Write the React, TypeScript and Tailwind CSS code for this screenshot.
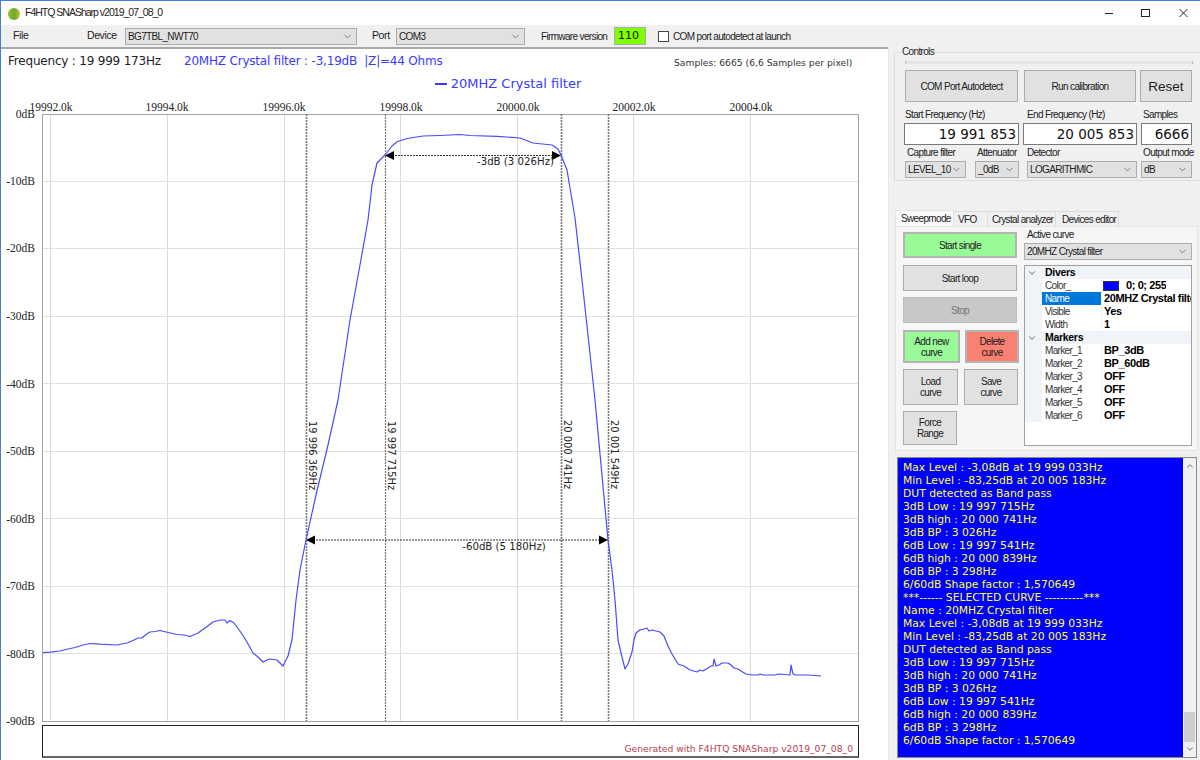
import React from "react";
import { ChevronDown, ChevronUp } from "lucide-react";

const curve: [number, number][] = [
  [43,652.7],[50,652.2],[60,651],[66,649.5],[75,647.5],[83,645],[90,643.5],[100,644.2],[117,645],[127,643],[133,640.5],[138,638],[142,637.8],[146,634.5],[150,632],[155,631.5],[160,630.5],[166,632],[177,634.5],[184,635],[190,636.5],[198,633],[205,628],[213,622],[220,620],[225,620],[227,623],[230,620.5],[234,623],[237,627],[242,634],[247,642],[253,653],[258,657],[263,662],[267,660],[270,659],[274,659.5],[277,660],[281,664],[283,666],[288,656],[292,640],[296,600],[300,570],[306,540],[316,495],[328,445],[338,400],[350,320],[360,265],[368,220],[372,185],[377,163],[385,155],[392,146],[397,141.7],[407,138.5],[423,136],[440,135.5],[460,134.5],[470,135.5],[497,136.3],[520,138],[533,143],[552,145],[558,149],[561,155],[567,170],[575,218],[582,280],[595,400],[608,540],[612,570],[615,600],[618,640],[622,657],[625,669],[628,664],[632,652],[634,640],[636,633],[640,630],[644,629],[647,628],[649,631],[652,630],[660,632],[664,636],[668,646],[672,654],[678,664],[684,666],[690,670],[697,672],[700,670],[703,671],[708,668],[711,666],[713,666],[714,659],[716,666],[719,665],[722,663],[728,663],[731,665],[734,668],[738,669],[741,671],[746,674],[752,675],[758,675],[760,674],[763,675],[775,675],[778,674],[790,675],[791,665],[793,674],[796,675],[808,675],[821,676],
];

const vGrid = [50.5, 167.5, 284.5, 400.5, 517.5, 633.5, 750.5];
const hGrid = [181.5, 248.5, 316.5, 383.5, 451.5, 518.5, 586.5, 653.5];
const yLabels: [string, number][] = [["0dB",114],["-10dB",181],["-20dB",248],["-30dB",316],["-40dB",384],["-50dB",451],["-60dB",519],["-70dB",586],["-80dB",654],["-90dB",721]];
const xLabels: [string, number][] = [["19992.0k",51],["19994.0k",167],["19996.0k",284],["19998.0k",401],["20000.0k",518],["20002.0k",634],["20004.0k",751]];
const markers: [number, string, number][] = [[306,"19 996 369Hz",421],[385,"19 997 715Hz",421],[561,"20 000 741Hz",420],[608,"20 001 549Hz",420]];

const logLines = [
  "Max Level : -3,08dB at 19 999 033Hz","Min Level : -83,25dB at 20 005 183Hz","DUT detected as Band pass","3dB Low : 19 997 715Hz","3dB high : 20 000 741Hz","3dB BP : 3 026Hz","6dB Low : 19 997 541Hz","6dB high : 20 000 839Hz","6dB BP : 3 298Hz","6/60dB Shape factor : 1,570649","***------ SELECTED CURVE ----------***","Name : 20MHZ Crystal filter","Max Level : -3,08dB at 19 999 033Hz","Min Level : -83,25dB at 20 005 183Hz","DUT detected as Band pass","3dB Low : 19 997 715Hz","3dB high : 20 000 741Hz","3dB BP : 3 026Hz","6dB Low : 19 997 541Hz","6dB high : 20 000 839Hz","6dB BP : 3 298Hz","6/60dB Shape factor : 1,570649",
];

function Combo({ text, className }: { text: string; className: string }) {
  return (
    <div className={`flex items-center justify-between bg-[#e1e1e1] border border-[#adadad] pl-[2px] pr-[3px] text-[10px] text-[#222] ${className}`}>
      <span className="whitespace-nowrap">{text}</span>
      <ChevronDown size={11} strokeWidth={1.5} className="text-[#555] shrink-0" />
    </div>
  );
}

function Btn({ children, className }: { children: React.ReactNode; className: string }) {
  return (
    <div className={`flex items-center justify-center text-center leading-[11px] border border-[#adadad] bg-[#e1e1e1] text-[#222] ${className}`}>
      {children}
    </div>
  );
}

function Colored({ children, className, color }: { children: React.ReactNode; className: string; color: string }) {
  return (
    <div className={`border-2 border-[#b4b4b4] flex items-center justify-center text-center leading-[11px] text-[10px] text-[#222] ${color} ${className}`}>
      {children}
    </div>
  );
}

function FreqInput({ value, className }: { value: string; className: string }) {
  return (
    <div className={`h-[22px] bg-white border border-[#7a7a7a] text-right pr-[2px] font-['DejaVu_Sans',sans-serif] tracking-normal text-[13.5px] leading-[20px] text-[#111] ${className}`}>
      {value}
    </div>
  );
}

function GridHeader({ label }: { label: string }) {
  return (
    <div className="flex h-[13px] items-center bg-[#f0f4f8] font-bold text-[10.5px] tracking-[-0.3px] leading-[13px] text-black">
      <ChevronDown size={10} strokeWidth={2} className="ml-[2px] mr-[8px] text-[#444]" />
      {label}
    </div>
  );
}

function GridRow({ name, value, selected }: { name: string; value: React.ReactNode; selected?: boolean }) {
  return (
    <div className="flex h-[13px] items-center text-[10px] leading-[13px]">
      <div className="w-[17px] h-full bg-[#f0f4f8] shrink-0" />
      <div className={`w-[60px] h-full pl-[3px] shrink-0 border-r border-[#f0f0f0] ${selected ? "bg-[#0078d7] text-white" : "text-[#333]"}`}>{name}</div>
      <div className="pl-[2px] font-bold text-[11px] tracking-[-0.4px] whitespace-nowrap text-black overflow-hidden">{value}</div>
    </div>
  );
}

export default function App() {
  return (
    <div className="w-[1200px] h-[760px] overflow-hidden flex flex-col bg-[#f0f0f0] border-t border-l border-[#3f80d8] font-['Liberation_Sans',sans-serif] text-[10px] tracking-[-0.65px]">
      {/* title bar */}
      <div className="h-[24px] shrink-0 bg-white flex items-center">
        <div className="ml-[7px] mt-px w-[12px] h-[12px] rounded-full bg-[linear-gradient(90deg,#8fbf2c,#6fa82c_55%,#b9c93a)]" />
        <span className="ml-[5px] text-[10.5px] tracking-[-1px] text-[#222]">F4HTQ SNASharp v2019_07_08_0</span>
        <svg className="ml-auto" width="100" height="24" viewBox="0 0 100 24" fill="none" stroke="#222" strokeWidth="1">
          <path d="M5 12.5H13" />
          <rect x="41.5" y="8.5" width="8" height="7" />
          <path d="M79.5 8L87.5 16M87.5 8L79.5 16" />
        </svg>
      </div>
      {/* toolbar */}
      <div className="h-[22px] shrink-0 flex items-center text-[#222]">
        <span className="ml-[12px] w-[74px] text-[10.5px] tracking-[-0.4px]">File</span>
        <span className="w-[38px] text-[10.5px] tracking-[-0.4px]">Device</span>
        <Combo text="BG7TBL_NWT70" className="w-[232px] h-[17px]" />
        <span className="ml-[15px] w-[24px] text-[10.5px] tracking-[-0.4px]">Port</span>
        <Combo text="COM3" className="w-[129px] h-[17px]" />
        <span className="ml-[16px] w-[73px] whitespace-nowrap">Firmware version</span>
        <div className="w-[32px] h-[18px] border border-[#aaa] bg-[#7fff00] pl-[3px] font-['DejaVu_Sans',sans-serif] tracking-normal text-[11px] leading-[16px] text-[#111]">110</div>
        <div className="ml-[12px] w-[11px] h-[11px] border border-[#444] bg-white" />
        <span className="ml-[4px] whitespace-nowrap">COM port autodetect at launch</span>
      </div>
      {/* main */}
      <div className="flex-1 flex min-h-0">
        <div className="w-[887px] shrink-0 flex flex-col bg-white border-t-2 border-[#a8a8a8] relative">
          <div className="h-[24px] shrink-0 flex items-center font-['DejaVu_Sans',sans-serif] tracking-[-0.2px] whitespace-nowrap">
            <span className="ml-[7px] w-[176px] text-[12px] text-[#222]">Frequency : 19 999 173Hz</span>
            <span className="w-[490px] text-[12px] text-[#3a3aff]">20MHZ Crystal filter : -3,19dB&nbsp; |Z|=44 Ohms</span>
            <span className="text-[9.2px] tracking-normal text-[#333] mt-[3px]">Samples: 6665 (6,6 Samples per pixel)</span>
          </div>
          <div className="h-[22px] shrink-0 flex items-center justify-center pl-[128px] font-['DejaVu_Sans',sans-serif] tracking-normal text-[13px] text-[#3a3aff]">
            <div className="ml-[-1px] w-[12px] h-[2px] bg-[#3a3aff] mr-[4px]" />
            20MHZ Crystal filter
          </div>
          <svg width="887" height="630" viewBox="1 95 887 630" className="block shrink-0 overflow-visible">
            {vGrid.map((x) => <line key={x} x1={x} x2={x} y1={114} y2={721} stroke="#dadada" />)}
            {hGrid.map((y) => <line key={y} x1={43} x2={858} y1={y} y2={y} stroke="#e0e0e0" strokeWidth={1.2} />)}
            <rect x="42.5" y="114.5" width="816" height="607" fill="none" stroke="#a4a4a4" />
            {xLabels.map(([t, x]) => <text key={t} x={x} y={111} textAnchor="middle" fontFamily="'Liberation Serif',serif" fontSize="11.5" letterSpacing="0" fill="#222">{t}</text>)}
            {yLabels.map(([t, y]) => <text key={t} x={35} y={y + 4} textAnchor="end" fontFamily="'Liberation Serif',serif" fontSize="11.5" letterSpacing="0" fill="#222">{t}</text>)}
            {markers.map(([x]) => <line key={x} x1={x + 0.5} x2={x + 0.5} y1={114} y2={721} stroke="#777" strokeWidth={x === 385 ? 1.2 : 1.6} strokeDasharray="2 1" />)}
            <polyline points={curve.map((p) => p.join(",")).join(" ")} fill="none" stroke="#4a4aff" strokeWidth={1.2} strokeLinejoin="round" />
            <line x1={392} x2={554} y1={155.5} y2={155.5} stroke="#333" strokeWidth={1.2} strokeDasharray="2 1" />
            <path d="M385 155.5L394 151V160Z M561 155.5L552 151V160Z" fill="#000" />
            <text x={515.5} y={165} textAnchor="middle" fontFamily="'DejaVu Sans',sans-serif" fontSize="10.2" letterSpacing="0" fill="#222">-3dB (3 026Hz)</text>
            <line x1={313} x2={601} y1={540} y2={540} stroke="#333" strokeWidth={1.2} strokeDasharray="2 1" />
            <path d="M306 540L315 535.5V544.5Z M608 540L599 535.5V544.5Z" fill="#000" />
            <text x={504} y={550} textAnchor="middle" fontFamily="'DejaVu Sans',sans-serif" fontSize="10.2" letterSpacing="0" fill="#222">-60dB (5 180Hz)</text>
            {markers.map(([x, t, y]) => (
              <text key={t} transform={`translate(${x + 2.5} ${y}) rotate(90)`} fontFamily="'DejaVu Sans',sans-serif" fontSize="9.9" letterSpacing="0" fill="#222">{t}</text>
            ))}
          </svg>
          <div className="ml-[41px] w-[817px] h-[33px] shrink-0 border border-[#222] border-b-2 border-b-[#666] flex items-end justify-end pr-[5px] font-['DejaVu_Sans',sans-serif] tracking-normal text-[9.2px] leading-[15px] text-[#b5404f] bg-white">
            Generated with F4HTQ SNASharp v2019_07_08_0
          </div>
        </div>

        {/* right side */}
        <div className="flex-1 min-w-0 pl-[5px] border-l border-[#e8e8e8]">
          {/* controls */}
          <div className="relative mt-[5px] h-[129px] border border-r-0 border-[#dcdcdc] pl-[10px] pt-[8px]">
            <span className="absolute left-[6px] top-[-7px] bg-[#f0f0f0] px-px leading-[12px] text-[#222]">Controls</span>
            <div className="w-[288px] h-[3px] bg-[#e4e4e4] border-x border-[#bbb]" />
            <div className="flex mt-[6px]">
              <Btn className="w-[113px] h-[32px]">COM Port Autodetect</Btn>
              <Btn className="ml-[6px] w-[112px] h-[32px]">Run calibration</Btn>
              <Btn className="ml-[4px] w-[52px] h-[32px] text-[13.5px] tracking-normal">Reset</Btn>
            </div>
            <div className="flex h-[21px] items-end pb-[2px] leading-[12px] text-[#222]">
              <span className="w-[122px]">Start Frequency (Hz)</span>
              <span className="w-[116px]">End Frequency (Hz)</span>
              <span>Samples</span>
            </div>
            <div className="flex ml-[-1px]">
              <FreqInput value="19 991 853" className="w-[115px]" />
              <FreqInput value="20 005 853" className="ml-[4px] w-[114px]" />
              <FreqInput value="6666" className="ml-[4px] w-[51px]" />
            </div>
            <div className="flex h-[15px] items-end pb-[1px] leading-[12px] text-[#222]">
              <span className="ml-[2px] w-[70px] whitespace-nowrap">Capture filter</span>
              <span className="w-[50px] whitespace-nowrap">Attenuator</span>
              <span className="w-[116px] whitespace-nowrap">Detector</span>
              <span className="whitespace-nowrap">Output mode</span>
            </div>
            <div className="flex mt-[1px]">
              <Combo text="LEVEL_10" className="w-[61px] h-[17px]" />
              <Combo text="_0dB" className="ml-[9px] w-[44px] h-[17px]" />
              <Combo text="LOGARITHMIC" className="ml-[8px] w-[110px] h-[17px]" />
              <Combo text="dB" className="ml-[4px] w-[51px] h-[17px]" />
            </div>
          </div>

          {/* tabs */}
          <div className="mt-[29px] flex items-end h-[16px] text-[#222] ml-px">
            <div className="w-[59px] h-[16px] bg-[#fafafa] border-x border-t border-[#e4e4e4] flex items-center pl-[5px] pb-px">Sweepmode</div>
            <div className="ml-px w-[33px] h-[15px] bg-[#f0f0f0] border-r border-t border-[#dcdcdc] flex items-center pl-[3px]">VFO</div>
            <div className="w-[68px] h-[15px] bg-[#f0f0f0] border-r border-t border-[#dcdcdc] flex items-center pl-[4px] whitespace-nowrap">Crystal analyzer</div>
            <div className="w-[63px] h-[15px] bg-[#f0f0f0] border-r border-t border-[#dcdcdc] flex items-center pl-[6px] whitespace-nowrap">Devices editor</div>
          </div>
          <div className="ml-[1px] w-[303px] h-[225px] bg-[#f6f6f6] border border-[#e4e4e4] flex pl-[7px] pt-[5px]">
            <div className="w-[121px] shrink-0">
              <Colored className="w-[114px] h-[26px]" color="bg-[#98fb98]">Start single</Colored>
              <Btn className="mt-[7px] w-[114px] h-[26px]">Start loop</Btn>
              <div className="mt-[6px] w-[114px] h-[26px] flex items-center justify-center bg-[#c8c8c8] border border-[#bdbdbd] text-[#777]">Stop</div>
              <div className="flex mt-[7px]">
                <Colored className="w-[57px] h-[33px]" color="bg-[#98fb98]">Add new<br />curve</Colored>
                <Colored className="ml-[5px] w-[54px] h-[33px]" color="bg-[#fa8072]">Delete<br />curve</Colored>
              </div>
              <div className="flex mt-[6px]">
                <Btn className="w-[55px] h-[36px]">Load<br />curve</Btn>
                <Btn className="ml-[6px] w-[54px] h-[36px]">Save<br />curve</Btn>
              </div>
              <Btn className="mt-[6px] w-[54px] h-[34px]">Force<br />Range</Btn>
            </div>
            <div className="w-[168px] shrink-0 flex flex-col">
              <span className="leading-[12px] text-[#222] ml-[3px] mt-[-3px]">Active curve</span>
              <Combo text="20MHZ Crystal filter" className="mt-[2px] w-[168px] h-[17px]" />
              <div className="mt-[5px] w-[168px] h-[181px] border border-[#a0a0a0] bg-white overflow-hidden">
                <GridHeader label="Divers" />
                <GridRow name="Color_" value={<span className="flex items-center"><span className="w-[16px] h-[10px] bg-[#0000ff] border border-[#333] mr-[7px] ml-[-1px]" />0; 0; 255</span>} />
                <GridRow name="Name" value="20MHZ Crystal filter" selected />
                <GridRow name="Visible" value="Yes" />
                <GridRow name="Width" value="1" />
                <GridHeader label="Markers" />
                <GridRow name="Marker_1" value="BP_3dB" />
                <GridRow name="Marker_2" value="BP_60dB" />
                <GridRow name="Marker_3" value="OFF" />
                <GridRow name="Marker_4" value="OFF" />
                <GridRow name="Marker_5" value="OFF" />
                <GridRow name="Marker_6" value="OFF" />
              </div>
            </div>
          </div>

          {/* log */}
          <div className="ml-[3px] mt-[6px] w-[300px] h-[301px] border border-[#8a8a8a] flex bg-[#f0f0f0]">
            <div className="w-[285px] h-full bg-[#0000ff] pl-[5px] pt-[3px] font-['DejaVu_Sans',sans-serif] tracking-normal text-[#ffff33] text-[10.75px] leading-[13px] overflow-hidden">
              {logLines.map((l, i) => <div key={i} className="whitespace-nowrap h-[13px]">{l}</div>)}
            </div>
            <div className="flex-1 flex flex-col items-center justify-between py-[3px] relative">
              <ChevronUp size={10} strokeWidth={2} className="text-[#555]" />
              <div className="absolute left-px right-px bottom-[15px] h-[30px] bg-[#cdcdcd]" />
              <ChevronDown size={10} strokeWidth={2} className="text-[#555]" />
            </div>
          </div>
        </div>
      </div>
    </div>
  );
}
